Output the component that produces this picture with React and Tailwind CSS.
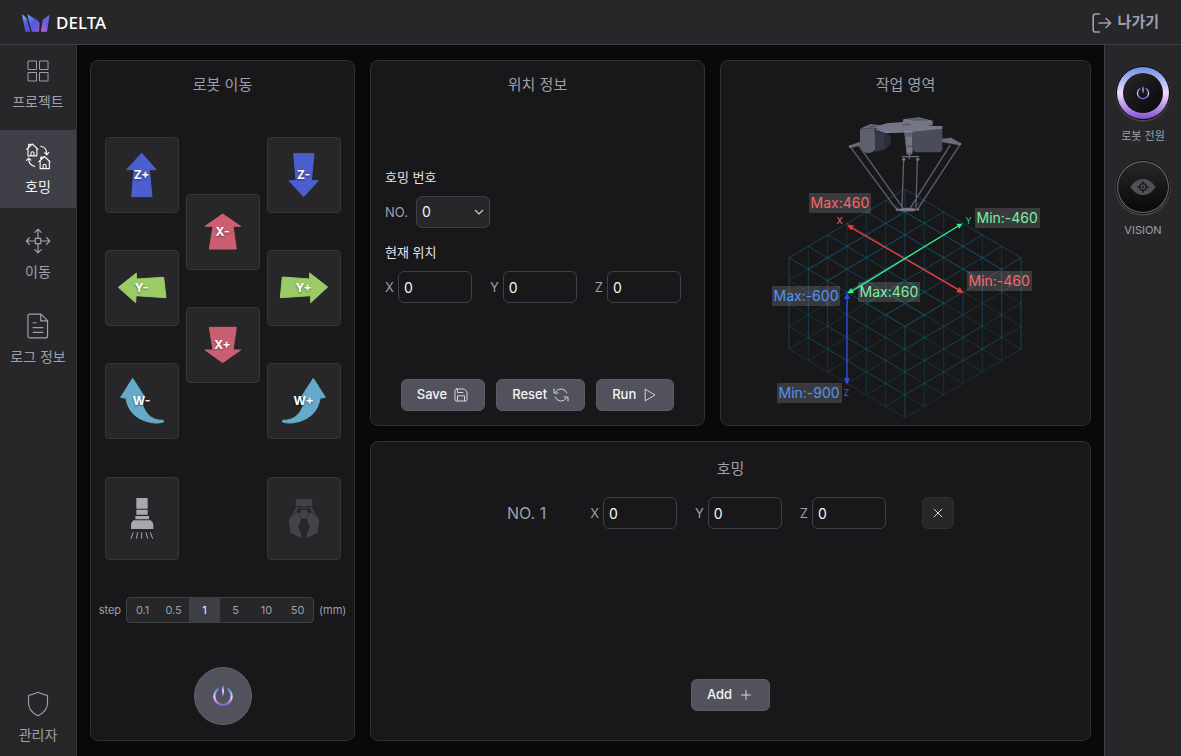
import { useState } from "react";

const GRADIENT = (
  <linearGradient id="power" x1="0" y1="0" x2="0" y2="1">
    <stop offset="0" stopColor="#5b7fe0" />
    <stop offset="0.5" stopColor="#e9d5ff" />
    <stop offset="1" stopColor="#8f5bd6" />
  </linearGradient>
);

function Logo() {
  return (
    <svg viewBox="66 41 84 54" className="h-[18px] w-7" aria-hidden="true">
      <defs>
        <linearGradient id="la" x1="0" y1="0" x2="0.5" y2="1">
          <stop offset="0" stopColor="#7cc4f0" />
          <stop offset="0.6" stopColor="#4f5fd8" />
          <stop offset="1" stopColor="#5a50d8" />
        </linearGradient>
        <linearGradient id="lb" x1="0" y1="0" x2="1" y2="1">
          <stop offset="0" stopColor="#68a8ec" />
          <stop offset="0.5" stopColor="#5058dc" />
          <stop offset="1" stopColor="#8a5ad8" />
        </linearGradient>
        <linearGradient id="lc" x1="0.8" y1="0" x2="0.4" y2="1">
          <stop offset="0" stopColor="#5a74e0" />
          <stop offset="0.5" stopColor="#6a58dc" />
          <stop offset="1" stopColor="#a468d8" />
        </linearGradient>
      </defs>
      <path d="M66 42L80 53L91 94H76Z" fill="url(#la)" />
      <path d="M82 42L112 60L119 68L117 94H95Z" fill="url(#lb)" />
      <path d="M149 43L128 58L123 94H141Z" fill="url(#lc)" />
    </svg>
  );
}

const ICONS = {
  projects: (
    <svg viewBox="0 0 24 24" className="size-6" fill="none" stroke="currentColor" strokeWidth="1">
      <path d="M2 2h8.500v8.500H2zM13.500 2H22v8.500h-8.500zM2 13.500h8.500V22H2zM13.500 13.500H22V22h-8.500z" />
    </svg>
  ),
  homing: (
    <svg viewBox="76 428 76 82" className="h-[27px] w-[25px]" fill="none" stroke="currentColor" strokeWidth="3.500" strokeLinecap="round" strokeLinejoin="round">
      <path d="M78 447L95 431L112 447M82 444V467H109V444M84 440V432H89M91 467V459a4.500 4.500 0 0 1 9 0V467" />
      <path d="M115 485L132 469L149 485M119 482V506H147V482M121 478V471H126M128 506V497a4.500 4.500 0 0 1 9 0V506" />
      <path d="M121 438C132 440 139 449 139 462M133 457L139 464L145 457" />
      <path d="M102 499C90 496 84 487 84 475M78 481L84 474L91 480" />
    </svg>
  ),
  move: (
    <svg viewBox="0 0 24 24" className="size-[26px]" fill="none" stroke="currentColor" strokeWidth="1.100" strokeLinecap="round" strokeLinejoin="round">
      <path d="M9.500 9.500h5v5h-5zM12 9.500V1.300M9 4l3-2.800L15 4M12 14.500v8.200M9 20l3 2.800L15 20M9.500 12H1.300M4 9l-2.800 3L4 15M14.500 12h8.200M20 9l2.800 3L20 15" />
    </svg>
  ),
  logs: (
    <svg viewBox="0 0 24 24" className="size-[26px]" fill="none" stroke="currentColor" strokeWidth="1.100" strokeLinejoin="round" strokeLinecap="round">
      <path d="M4.500 1h10.300l6 6v14.200a1.800 1.800 0 0 1-1.800 1.800H4.500a1.800 1.800 0 0 1-1.800-1.800V2.800A1.800 1.800 0 0 1 4.500 1zM14.500 1.200v6h6M7.500 9h2.800M7.500 13.500h9M7.500 17.800h9" />
    </svg>
  ),
  admin: (
    <svg viewBox="0 0 24 26" className="h-[26px] w-6" fill="none" stroke="currentColor" strokeWidth="1.100" strokeLinejoin="round">
      <path d="M12 1.200C9 2.500 5.500 4 2.500 4.200V12c0 6 4.500 10.300 9.500 12.800 5-2.500 9.500-6.800 9.500-12.800V4.200C18.500 4 15 2.500 12 1.200z" />
    </svg>
  ),
};

function NavItem({ icon, label, active }) {
  return (
    <a
      href={"#" + icon}
      aria-current={active ? "page" : undefined}
      className={
        "flex h-[78px] flex-col items-center pt-[13px] " +
        (active ? "bg-zinc-700 text-zinc-100" : "text-zinc-400")
      }
    >
      <span className="grid size-[26px] place-items-center">{ICONS[icon]}</span>
      <span className="mt-2 text-sm leading-5">{label}</span>
    </a>
  );
}

function JogButton({ label, color, path }) {
  return (
    <button aria-label={label} className="grid h-[76px] w-[74px] place-items-center rounded border border-[#363639] bg-zinc-800">
      <svg viewBox="3 3 216 222" className="h-[74px] w-[72px] [grid-area:1/1]" fill={color} stroke={color} strokeWidth="3" strokeLinejoin="round">
        <path d={path} />
      </svg>
      <span className="text-xs font-bold text-white [grid-area:1/1] [text-shadow:0_1px_2px_rgb(0_0_0/0.5)]">{label}</span>
    </button>
  );
}

function PowerIcon({ className }) {
  return (
    <svg viewBox="0 0 24 24" className={className} fill="none" stroke="url(#power)" strokeWidth="2.200" strokeLinecap="round" aria-hidden="true">
      <defs>{GRADIENT}</defs>
      <path d="M6.500 4.500a9.500 9.500 0 1 0 11 0" />
      <path d="M11.900 2L12.100 11" />
    </svg>
  );
}

function Panel({ title, className = "", titleClass = "pt-[14px] pb-[5px]", children }) {
  return (
    <section className={"flex min-w-0 flex-col rounded-lg border border-[#303033] bg-zinc-900 " + className}>
      <h2 className={"text-center text-[15px] leading-5 text-zinc-400 " + titleClass}>{title}</h2>
      {children}
    </section>
  );
}

const STEPS = ["0.1", "0.5", "1", "5", "10", "50"];

function MovePanel() {
  const [step, setStep] = useState("1");
  return (
    <Panel title="로봇 이동" className="row-span-2">
      <div className="mt-[37px] flex items-center justify-center gap-[7px]">
        <div className="flex flex-col gap-[37px]">
          <JogButton label="Z+" color="#4b5fce" path="M110 49L154 98H133L141 179H80L87 98H65Z" />
          <JogButton label="Y-" color="#9bca67" path="M40 112L94 69V87L176 82L183 143L93 137L92 158Z" />
          <JogButton label="W-" color="#65aaca" path="M83 46L119 102L108 105C114 145 134 173 175 172V177C162 181 148 181 136 178C96 170 69 147 63 106L47 103Z" />
        </div>
        <div className="flex flex-col gap-[37px]">
          <JogButton label="X-" color="#cb5f71" path="M110 60L164 97H141L151 165H70L81 97H57Z" />
          <JogButton label="X+" color="#cb5f71" path="M70 61H151L141 129H164L110 167L57 129H81Z" />
        </div>
        <div className="flex flex-col gap-[37px]">
          <JogButton label="Z-" color="#4b5fce" path="M80 50H141L133 131H154L110 179L66 131H87Z" />
          <JogButton label="Y+" color="#9bca67" path="M46 81L128 87V69L182 111L131 158V137L40 143Z" />
          <JogButton label="W+" color="#65aaca" path="M139 46L103 102L114 105C108 145 88 173 47 172V177C60 181 74 181 86 178C126 170 153 147 159 106L175 103Z" />
        </div>
      </div>
      <div className="mt-[38px] flex justify-center gap-[88px]">
        <button aria-label="suction" className="rounded border border-[#363639] bg-zinc-800">
          <svg viewBox="3 3 216 243" className="h-[81px] w-[72px]" fill="#a8a8b1">
            <path d="M94 63h34v32H94zM94 98h34v15H94zM91 117h41v10H91zM85 130h52q8 6 8 16v10H78v-10q0-10 7-16z" />
            <path d="M85 166L78 185M98 166L94 185M110 166V185M123 166L128 185M136 166L143 185" stroke="#a8a8b1" strokeWidth="3" />
          </svg>
        </button>
        <button aria-label="gripper" className="rounded border border-[#363639] bg-zinc-800">
          <svg viewBox="3 3 216 243" className="h-[81px] w-[72px]" fill="#424249">
            <rect x="86" y="66" width="50" height="22" rx="5" />
            <path d="M87 91H96L88 103Q84 110 76 113ZM135 91H126L134 103Q138 110 146 113ZM98 91H124L119 96Q111 92 103 96Z" />
            <circle cx="111" cy="112" r="13.500" />
            <path d="M74 117L89 106L95 109Q97 122 103 127L93 150L103 170V184L70 167L66 129ZM148 117L133 106L127 109Q125 122 119 127L129 150L119 170V184L152 167L156 129Z" />
          </svg>
        </button>
      </div>
      <fieldset className="mt-[37px] flex items-center justify-center gap-[5px] text-[11px] text-zinc-400">
        <span>step</span>
        <div className="flex overflow-hidden rounded border border-zinc-700 bg-zinc-800">
          {STEPS.map((s) => (
            <label key={s} className="grid h-6 w-[31px] cursor-pointer place-items-center has-[input:checked]:bg-zinc-700 has-[input:checked]:text-zinc-100">
              <input type="radio" name="step" value={s} checked={s === step} onChange={() => setStep(s)} className="sr-only" />
              {s}
            </label>
          ))}
        </div>
        <span>(mm)</span>
      </fieldset>
      <button aria-label="power" className="mt-auto mb-[15px] grid size-[58px] place-items-center self-center rounded-full border border-[#606068] bg-zinc-600">
        <PowerIcon className="size-[22px]" />
      </button>
    </Panel>
  );
}

function AxisFields({ group }) {
  return (
    <div className="flex items-center gap-[18px]">
      {["X", "Y", "Z"].map((axis) => (
        <div key={axis} className="flex items-center gap-1">
          <label htmlFor={group + axis} className="pt-px text-[13px] text-zinc-400">{axis}</label>
          <input
            id={group + axis}
            defaultValue="0"
            className="h-8 w-[74px] rounded-md border border-zinc-700 bg-zinc-900 px-[5px] text-sm text-zinc-100"
          />
        </div>
      ))}
    </div>
  );
}

function ActionButton({ children, label }) {
  return (
    <button className="flex h-8 items-center gap-[6px] rounded-md border border-[#5c5c65] bg-zinc-600 px-[15px] text-[13px] font-medium text-zinc-100">
      {label}
      <svg viewBox="0 0 16 16" className="size-4 text-zinc-300" fill="none" stroke="currentColor" strokeWidth="1" strokeLinecap="round" strokeLinejoin="round">
        {children}
      </svg>
    </button>
  );
}

function PositionPanel() {
  return (
    <Panel title="위치 정보">
      <div className="mt-[68px] flex flex-col px-[14px] text-[13px]">
        <h3 className="leading-[18px] text-zinc-200">호밍 번호</h3>
        <div className="mt-[10px] flex items-center gap-2">
          <label htmlFor="homing-number" className="pt-px text-[13px] text-zinc-400">NO.</label>
          <div className="relative">
            <select id="homing-number" defaultValue="0" className="h-8 w-[74px] appearance-none rounded-md border border-zinc-700 bg-zinc-800 px-[5px] text-sm text-zinc-100">
              <option>0</option>
              <option>1</option>
            </select>
            <svg viewBox="0 0 10 10" className="pointer-events-none absolute top-[11px] right-[6px] size-[10px] text-zinc-300" fill="none" stroke="currentColor" strokeWidth="1.100">
              <path d="M1 3l4 4 4-4" />
            </svg>
          </div>
        </div>
        <h3 className="mt-[15px] leading-[18px] text-zinc-200">현재 위치</h3>
        <div className="mt-[10px]">
          <AxisFields group="current" />
        </div>
      </div>
      <div className="mt-auto mb-[14px] flex justify-center gap-[11px]">
        <ActionButton label="Save">
          <path d="M3.500 2h7.700L14 4.800v7.700a1.500 1.500 0 0 1-1.500 1.500h-9A1.500 1.500 0 0 1 2 12.500v-9A1.500 1.500 0 0 1 3.500 2zM4.500 2v3.500h5.500M4.500 14V8.800h7V14" />
        </ActionButton>
        <ActionButton label="Reset">
          <path d="M13.800 6A6.300 6.300 0 0 0 2.500 5M1 2v4h4M2.200 10a6.300 6.300 0 0 0 11.300 1M15 14v-4h-4" />
        </ActionButton>
        <ActionButton label="Run">
          <path d="M3.500 2.300L13 8l-9.500 5.700z" />
        </ActionButton>
      </div>
    </Panel>
  );
}

/* Isometric work volume: 6 x 6 cells wide, 4 cells deep. */
const project = (i, j, h) =>
  (495 + (i - j) * 58).toFixed(1) + " " + (267 + (i + j) * 34.4 + h * 68.4).toFixed(1);
const segment = (a, b) => "M" + project(...a) + "L" + project(...b);

const topFace = [];
const otherFaces = [];
for (let k = 0; k <= 6; k++) {
  topFace.push(segment([k, 0, 0], [k, 6, 0]), segment([0, k, 0], [6, k, 0]));
  otherFaces.push(segment([k, 0, 4], [k, 6, 4]), segment([0, k, 4], [6, k, 4]));
  for (const side of [0, 6]) {
    otherFaces.push(segment([k, side, 0], [k, side, 4]), segment([side, k, 0], [side, k, 4]));
  }
}
for (let h = 1; h < 4; h++) {
  for (const side of [0, 6]) {
    otherFaces.push(segment([0, side, h], [6, side, h]), segment([side, 0, h], [side, 6, h]));
  }
}

function Robot() {
  return (
    <g strokeLinecap="round" strokeLinejoin="round">
      <g stroke="#5f606d" strokeWidth="4" fill="none">
        <path d="M332 142L470 328M356 136L490 326M630 136L512 322M660 134L534 326M491 178L486 322M532 178L528 322" />
      </g>
      <g stroke="#4e4f59" strokeWidth="1" fill="#6d6e7c">
        <path d="M326 138L358 126L364 136L330 144Z" />
        <path d="M606 116L634 114L662 130L658 136L606 126Z" />
        <path d="M468 330Q500 318 536 328L520 334H484Z" fill="#7a7b8a" />
      </g>
      <path d="M402 98H438Q454 104 453 122Q450 140 438 146L404 156Z" fill="#2c2f3a" />
      <path d="M360 88L404 84L406 148Q396 162 378 158Q360 150 360 134Z" fill="#5d606e" />
      <path d="M404 84L432 94L434 148L406 156Z" fill="#353844" />
      <path d="M492 92H520V138L516 164H500L497 138Z" fill="#5f6170" />
      <path d="M499 110H517V136H499ZM500 142H517V158H500Z" fill="#757787" />
      <path d="M487 170H536M508 158V176" stroke="#6d6e7c" strokeWidth="4" />
      <path d="M516 92L607 82V150L600 157H526L516 148Z" fill="#4a4c59" />
      <path d="M516 92L546 78L607 78V86L516 95Z" fill="#777988" />
      <path d="M360 86L392 72L420 76L440 70L488 66L490 58L536 52L578 62V76L546 80L518 94L440 96L408 84Z" fill="#747687" />
      <path d="M376 82L398 74L416 78L400 85ZM484 72L506 70L514 75L494 77ZM498 58L536 54L566 61L530 63Z" fill="#5b5d6c" />
      <path d="M408 85L440 95L518 93L519 97L438 99L408 88Z" fill="#8b8d9c" />
      <circle cx="630" cy="121" r="8" fill="#6b6d7b" />
      <g fill="#777765">
        <circle cx="331" cy="140" r="4" /><circle cx="660" cy="132" r="4" /><circle cx="491" cy="178" r="5" /><circle cx="533" cy="178" r="5" />
        <circle cx="472" cy="329" r="4" /><circle cx="534" cy="328" r="4" />
      </g>
    </g>
  );
}

function LimitTag({ className, children }) {
  return (
    <span className={"absolute bg-white/15 px-[2px] text-sm leading-5 whitespace-nowrap " + className}>{children}</span>
  );
}

function WorkspacePanel() {
  return (
    <Panel title="작업 영역">
      <div className="relative h-[322px] w-[332px] self-center">
        <svg viewBox="0 0 990 966" className="h-[322px] w-[330px]" fill="none" role="img" aria-label="작업 영역">
          <path d={otherFaces.join("")} stroke="#0e7490" strokeOpacity="0.320" strokeWidth="2.500" />
          <path d={topFace.join("")} stroke="#0e7fa8" strokeOpacity="0.400" strokeWidth="3" />
          <Robot />
          <g strokeWidth="4">
            <path d="M332 382L660 572" stroke="#ef3b3b" />
            <path d="M655 378L334 574" stroke="#34f08c" />
            <path d="M321 590V842" stroke="#2f4be8" />
          </g>
          <path d="M321 376L342 376L333 391ZM670 579L649 577L659 561Z" fill="#ef3b3b" />
          <path d="M667 371L649 371L658 386ZM322 580L342 579L333 564Z" fill="#34f08c" />
          <path d="M321 578L330 597H312ZM321 854L330 835H312Z" fill="#2f4be8" />
        </svg>
        <span className="absolute top-[115px] left-[97px] text-[9px] leading-3 text-red-400">X</span>
        <span className="absolute top-[115px] left-[226px] text-[9px] leading-3 text-green-400">Y</span>
        <span className="absolute top-[287px] left-[104px] text-[9px] leading-3 text-[#3d5af0]">Z</span>
        <LimitTag className="top-[93px] left-[69px] text-red-400">Max:460</LimitTag>
        <LimitTag className="top-[108px] left-[235px] text-green-300">Min:-460</LimitTag>
        <LimitTag className="top-[182px] left-[118px] text-green-300">Max:460</LimitTag>
        <LimitTag className="top-[171px] left-[227px] text-red-400">Min:-460</LimitTag>
        <LimitTag className="top-[186px] left-[32px] text-[#5592f5]">Max:-600</LimitTag>
        <LimitTag className="top-[283px] left-[37px] text-[#5592f5]">Min:-900</LimitTag>
      </div>
    </Panel>
  );
}

function HomingPanel() {
  return (
    <Panel title="호밍" className="col-span-2" titleClass="pt-[17px] pb-[2px]">
      <div className="mt-4 flex items-center justify-center">
        <span className="text-base text-zinc-400">NO. 1</span>
        <div className="mr-9 ml-11">
          <AxisFields group="homing1" />
        </div>
        <button aria-label="delete" className="grid size-8 place-items-center rounded-md border border-[#303033] bg-zinc-800 text-zinc-300">
          <svg viewBox="0 0 10 10" className="size-[10px]" fill="none" stroke="currentColor" strokeWidth="1">
            <path d="M0.800 0.800l8.400 8.400M9.200 0.800L0.800 9.200" />
          </svg>
        </button>
      </div>
      <div className="mt-auto mb-[29px] flex justify-center">
        <ActionButton label="Add">
          <path d="M8 3.500v9M3.500 8h9" />
        </ActionButton>
      </div>
    </Panel>
  );
}

export default function App() {
  return (
    <div className="flex min-h-screen flex-col bg-zinc-950 font-['Inter','Noto_Sans_CJK_KR',sans-serif]">
      <header className="flex h-[45px] items-center justify-between border-b border-zinc-700 bg-zinc-800 px-[22px] pt-px">
        <a href="#home" className="flex items-center gap-[6px] font-['Noto_Sans',sans-serif] text-[17px] font-medium text-white">
          <Logo />
          DELTA
        </a>
        <button className="flex items-center gap-[6px] text-[15px] font-semibold text-zinc-400">
          <svg viewBox="0 0 20 20" className="size-5" fill="none" stroke="currentColor" strokeWidth="1.600" strokeLinecap="round" strokeLinejoin="round" aria-hidden="true">
            <path d="M7.500 1H3.500A2.300 2.300 0 0 0 1.200 3.300V16.700A2.300 2.300 0 0 0 3.500 19H7.500M7 10H18.500M14 5.500L18.700 10L14 14.500" />
          </svg>
          나가기
        </button>
      </header>
      <div className="flex flex-1">
        <nav className="flex w-[77px] shrink-0 flex-col gap-[7px] border-r border-[#333336] bg-zinc-800">
          <NavItem icon="projects" label="프로젝트" />
          <NavItem icon="homing" label="호밍" active />
          <NavItem icon="move" label="이동" />
          <NavItem icon="logs" label="로그 정보" />
          <div className="mt-auto">
            <NavItem icon="admin" label="관리자" />
          </div>
        </nav>
        <main className="grid min-w-0 flex-1 grid-cols-[265fr_335fr_371fr] grid-rows-[366fr_300fr] gap-[15px] px-[13px] py-[15px]">
          <MovePanel />
          <PositionPanel />
          <WorkspacePanel />
          <HomingPanel />
        </main>
        <aside className="flex w-[77px] shrink-0 flex-col items-center border-l border-zinc-700 bg-zinc-800 pt-[21px] text-[11px] leading-4 text-zinc-400">
          <button className="flex flex-col items-center gap-2">
            <span className="grid size-[54px] place-items-center rounded-full border border-zinc-950 bg-linear-to-b from-[#6f8fe6] via-[#f0dcff] to-[#8350d0] shadow-[0_1px_2px_rgb(255_255_255/0.25)]">
              <span className="grid size-10 place-items-center rounded-full bg-linear-to-br from-zinc-800 to-zinc-950">
                <PowerIcon className="size-[14px]" />
              </span>
            </span>
            로봇 전원
          </button>
          <button className="mt-4 flex flex-col items-center gap-2">
            <span className="grid size-[54px] place-items-center rounded-full border border-zinc-950 bg-[#6b6b70] shadow-[0_1px_2px_rgb(255_255_255/0.25)]">
              <span className="grid size-[50px] place-items-center rounded-full bg-linear-to-b from-zinc-800 to-zinc-950">
                <svg viewBox="0 0 78 52" className="h-[18px] w-[26px]" aria-hidden="true">
                  <path d="M1 26C14 8 25 2 39 2s25 6 38 24C64 44 53 50 39 50S14 44 1 26z" fill="#505055" />
                  <circle cx="39" cy="26" r="10" fill="none" stroke="#19191b" strokeWidth="4" />
                  <circle cx="39" cy="26" r="3" fill="#19191b" />
                  <path d="M39 9v10M39 33v10M22 26h10M46 26h10" stroke="#19191b" strokeWidth="4" />
                </svg>
              </span>
            </span>
            VISION
          </button>
        </aside>
      </div>
    </div>
  );
}
